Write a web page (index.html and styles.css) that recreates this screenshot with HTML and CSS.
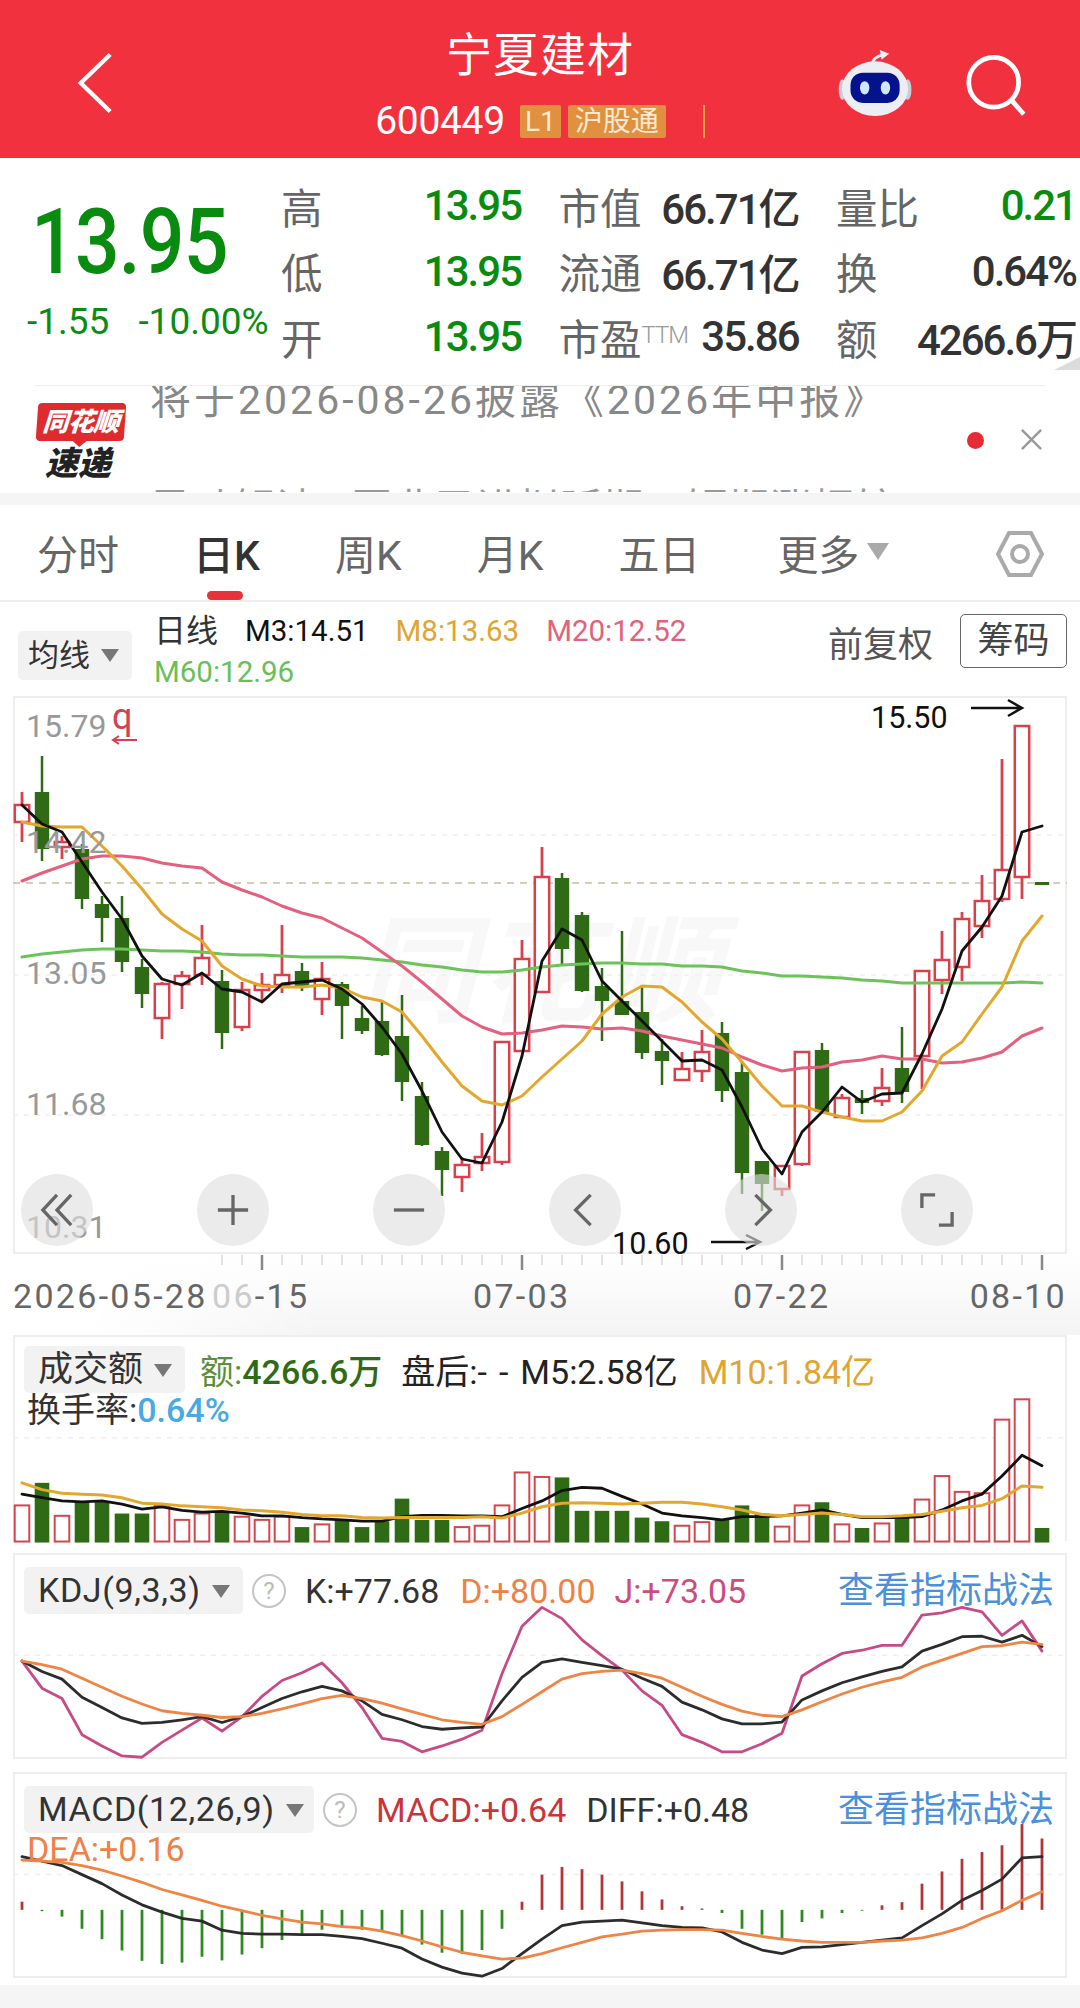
FILE: index.html
```html
<!DOCTYPE html>
<html lang="zh-CN">
<head>
<meta charset="utf-8">
<title>宁夏建材</title>
<link rel="stylesheet" href="styles.css">
</head>
<body>
<div class="page">
  <header class="topbar">
    <svg class="ic-back" viewBox="0 0 40 66"><path d="M36 3 L5 33 L36 63"/></svg>
    <div class="topbar-center">
      <div class="stock-name">宁夏建材</div>
      <div class="stock-code-row">
        <span class="stock-code">600449</span>
        <span class="tag tag-l1">L1</span>
        <span class="tag tag-hgt">沪股通</span>
        <span class="tag-bar"></span>
      </div>
    </div>
    <svg class="ic-robot" viewBox="0 0 80 72">
      <path class="robot-ant" d="M36 16 C36 9 41 7 48 5"/>
      <path class="robot-tip" d="M44 0 L54 4 L46 10 Z"/>
      <ellipse class="robot-ear" cx="4.500" cy="42" rx="4" ry="11"/>
      <ellipse class="robot-ear" cx="73.500" cy="42" rx="4" ry="11"/>
      <ellipse class="robot-head" cx="39" cy="41" rx="35" ry="29"/>
      <rect class="robot-face" x="13" y="24" width="52" height="32" rx="13"/>
      <ellipse class="robot-eye" cx="28" cy="40" rx="5" ry="7"/>
      <ellipse class="robot-eye" cx="50" cy="40" rx="5" ry="7"/>
    </svg>
    <svg class="ic-search" viewBox="0 0 64 66"><circle cx="29" cy="29" r="26.500"/><path d="M48 48 L61 63"/></svg>
  </header>

  <section class="quote">
    <div class="price-box">
      <div class="price"><span class="narrow">13.95</span></div>
      <div class="change"><span>-1.55</span><span>-10.00%</span></div>
    </div>
    <div class="q-grid">
      <div class="q-pair"><span class="q-label">高</span><span class="q-val up">13.95</span></div>
      <div class="q-pair"><span class="q-label">市值</span><span class="q-val">66.71亿</span></div>
      <div class="q-pair"><span class="q-label">量比</span><span class="q-val up">0.21</span></div>
      <div class="q-pair"><span class="q-label">低</span><span class="q-val up">13.95</span></div>
      <div class="q-pair"><span class="q-label">流通</span><span class="q-val">66.71亿</span></div>
      <div class="q-pair"><span class="q-label">换</span><span class="q-val">0.64%</span></div>
      <div class="q-pair"><span class="q-label">开</span><span class="q-val up">13.95</span></div>
      <div class="q-pair"><span class="q-label">市盈<sup class="ttm">TTM</sup></span><span class="q-val">35.86</span></div>
      <div class="q-pair"><span class="q-label">额</span><span class="q-val">4266.6万</span></div>
    </div>
    <span class="corner"></span>
  </section>

  <section class="news">
    <div class="logo">
      <div class="logo-top"><span>同花顺</span></div>
      <div class="logo-bot">速递</div>
    </div>
    <div class="news-text">
      <p class="news-l1">将于2026-08-26披露《2026年中报》</p>
      <p class="news-l2">异动解读 · 同业已进拟延期，短期涨幅较</p>
    </div>
    <span class="news-dot"></span>
    <svg class="news-x" viewBox="0 0 24 24"><path d="M2 2 L22 22 M22 2 L2 22"/></svg>
  </section>

  <div class="gap"></div>

  <nav class="tabs">
    <span class="tab">分时</span>
    <span class="tab tab-on">日K</span>
    <span class="tab">周K</span>
    <span class="tab">月K</span>
    <span class="tab">五日</span>
    <span class="tab tab-more">更多<i class="tri tri-tab"></i></span>
    <svg class="ic-hex" viewBox="0 0 50 48"><path d="M14 3 H36 L47 24 L36 45 H14 L3 24 Z"/><circle cx="25" cy="24" r="8"/></svg>
  </nav>

  <div class="toolbar">
    <span class="pick pick-ma">均线<i class="tri"></i></span>
    <div class="ma-list">
      <span class="ma-day">日线</span>
      <span class="c-black">M3:14.51</span>
      <span class="c-gold">M8:13.63</span>
      <span class="c-pink">M20:12.52</span>
      <span class="c-green ma-60">M60:12.96</span>
    </div>
    <span class="fq">前复权</span>
    <span class="chip-btn">筹码</span>
  </div>

  <div class="charts">
    <div class="k-panel">
      <span class="wm">同花顺</span>
      <svg class="chart" id="kchart" viewBox="13 697 1054 558"></svg>
      <span class="axis-l l1">15.79</span>
      <span class="axis-l l2">14.42</span>
      <span class="axis-l l3">13.05</span>
      <span class="axis-l l4">11.68</span>
      <span class="axis-l l5">10.31</span>
      <span class="nine">q</span>
      <svg class="nine-arrow" viewBox="0 0 26 10"><path d="M26 5 H2 M8 1 L2 5 L8 9"/></svg>
      <span class="hi-lab">15.50</span>
      <svg class="hi-arrow" viewBox="0 0 54 20"><path d="M0 10 H51 M37 2 L51 10 L37 18"/></svg>
      <span class="lo-lab">10.60</span>
      <svg class="lo-arrow" viewBox="0 0 52 20"><path d="M0 10 H49 M35 3 L49 10 L35 17"/></svg>
      <div class="rounds">
        <span class="round"><svg viewBox="0 0 36 36"><path d="M18 2 L3 18 L18 34 M33 2 L18 18 L33 34"/></svg></span>
        <span class="round"><svg viewBox="0 0 36 36"><path d="M18 2 V34 M2 18 H34"/></svg></span>
        <span class="round"><svg viewBox="0 0 36 36"><path d="M2 18 H34"/></svg></span>
        <span class="round"><svg viewBox="0 0 36 36"><path d="M24 2 L8 18 L24 34"/></svg></span>
        <span class="round"><svg viewBox="0 0 36 36"><path d="M12 2 L28 18 L12 34"/></svg></span>
        <span class="round"><svg viewBox="0 0 36 36"><path d="M2 16 V2 H16 M34 20 V34 H20"/></svg></span>
      </div>
    </div>

    <div class="axis">
      <svg class="ticks" id="ticks" viewBox="13 1255 1054 18"></svg>
      <div class="dates">
        <span class="d1">2026-05-28</span>
        <span class="d2"><em>06</em>-15</span>
        <span class="d3">07-03</span>
        <span class="d4">07-22</span>
        <span class="d5">08-10</span>
      </div>
    </div>

    <div class="panel panel-vol">
      <svg class="chart" id="vol" viewBox="13 1336 1054 206"></svg>
      <div class="p-head">
        <span class="pick pick-vol">成交额<i class="tri"></i></span>
        <span class="c-dgreen v-amt"><b>额:</b>4266.6万</span>
        <span class="v-pan">盘后:<span class="dashes">--</span>M5:2.58亿</span>
        <span class="c-gold v-m10">M10:1.84亿</span>
      </div>
      <div class="p-sub v-turn">换手率:<span class="c-blue">0.64%</span></div>
    </div>

    <div class="panel panel-kdj">
      <svg class="chart" id="kdj" viewBox="13 1554 1054 206"></svg>
      <div class="p-head">
        <span class="pick pick-kdj">KDJ(9,3,3)<i class="tri"></i></span>
        <span class="help">?</span>
        <span class="k-k">K:+77.68</span>
        <span class="c-orange k-d">D:+80.00</span>
        <span class="c-mag k-j">J:+73.05</span>
        <span class="link">查看指标战法</span>
      </div>
    </div>

    <div class="panel panel-macd">
      <svg class="chart" id="macd" viewBox="13 1773 1054 206"></svg>
      <div class="p-head">
        <span class="pick pick-macd">MACD(12,26,9)<i class="tri"></i></span>
        <span class="help">?</span>
        <span class="c-red m-m">MACD:+0.64</span>
        <span class="m-diff">DIFF:+0.48</span>
        <span class="link">查看指标战法</span>
      </div>
      <div class="p-sub c-orange m-dea">DEA:+0.16</div>
    </div>
  </div>
  <div class="foot"></div>
</div>
<script src="chart.js"></script>
</body>
</html>
```

FILE: styles.css
```css
* { box-sizing: border-box; }
html, body { margin: 0; padding: 0; background: #fff; }
body { font-family: Roboto, "Noto Sans CJK SC", sans-serif; color: #333; }
.page { width: 1080px; height: 2008px; overflow: hidden; display: flex; flex-direction: column; position: relative; }
p { margin: 0; }
i, em { font-style: normal; }

/* top bar */
.topbar { height: 158px; flex: none; background: #f1323e; color: #fff; position: relative; display: flex; justify-content: center; }
.topbar-center { display: flex; flex-direction: column; align-items: center; padding-top: 28px; }
.stock-name { font-size: 46px; line-height: 54px; letter-spacing: 1px; }
.stock-code-row { display: flex; align-items: center; gap: 7px; height: 34px; margin-top: 22px; }
.stock-code { font-size: 39px; letter-spacing: -.3px; margin-right: 8px; }
.tag { height: 33px; line-height: 33px; background: #e0903f; font-size: 28px; border-radius: 2px; text-align: center; color: #ffe9d0; }
.tag-l1 { width: 41px; }
.tag-hgt { width: 98px; }
.tag-bar { width: 2px; height: 33px; background: #eda046; margin-left: 30px; }
.ic-back { position: absolute; left: 76px; top: 51px; width: 38px; height: 64px; fill: none; stroke: #fff; stroke-width: 4.500; }
.ic-search { position: absolute; left: 966px; top: 55px; width: 61px; height: 62px; fill: none; stroke: #fff; stroke-width: 5; }
.ic-robot { position: absolute; left: 838px; top: 50px; width: 76px; height: 68px; }
.robot-ant { fill: none; stroke: #eef0f6; stroke-width: 3; }
.robot-tip { fill: #eef0f6; }
.robot-ear { fill: #c9cdd8; }
.robot-head { fill: #eceef4; }
.robot-face { fill: #04138c; }
.robot-eye { fill: #cfe6fb; }

/* quote */
.quote { height: 227px; flex: none; position: relative; display: flex; }
.price-box { width: 281px; flex: none; padding: 41px 0 0 31px; }
.price { font-size: 90px; line-height: 88px; font-weight: 500; color: #098b10; height: 88px; }
.narrow { display: inline-block; transform: scaleX(.875); transform-origin: left; letter-spacing: -1px; }
.change { display: flex; gap: 29px; margin: 13px 0 0 -4px; font-size: 37px; line-height: 44px; color: #0a8c12; white-space: nowrap; }
.q-grid { display: grid; grid-template-columns: 240px 240px 240px; column-gap: 37.500px; grid-auto-rows: 65.500px; padding-top: 15px; }
.q-pair { display: flex; justify-content: space-between; align-items: center; white-space: nowrap; }
.q-label { font-size: 41.500px; color: #666; }
.q-val { font-size: 42px; color: #333; font-weight: 500; letter-spacing: -2px; }
.q-val.up { color: #098b10; }
.ttm { font-size: 24px; color: #999; font-weight: 300; vertical-align: 12px; line-height: 0; letter-spacing: -1px; }
.corner { position: absolute; right: 0; bottom: 15px; width: 0; height: 0; border-style: solid; border-width: 0 0 13px 26px; border-color: transparent transparent #dcdcdc transparent; }

/* news */
.news { height: 108px; flex: none; margin: 0 35px; border-top: 1.500px solid #eee; position: relative; display: flex; }
.logo { width: 115px; flex: none; padding: 17px 0 0 2px; }
.logo-top { width: 88px; height: 38px; background: #de2c2e; border-radius: 4px; transform: skewX(-4deg); text-align: center; color: #fff; position: relative; }
.logo-top::after { content: ""; position: absolute; left: 37px; bottom: -6px; border-style: solid; border-width: 6px 7px 0 7px; border-color: #de2c2e transparent transparent transparent; }
.logo-top span { display: inline-block; font-size: 26px; line-height: 38px; font-weight: 900; font-style: italic; letter-spacing: -.5px; }
.logo-bot { margin: 5px 0 0 8px; font-size: 33px; line-height: 36px; font-weight: 900; font-style: italic; color: #222; }
.news-text { position: relative; flex: 1; height: 106px; overflow: hidden; color: #888; }
.news-l1 { font-size: 41px; line-height: 46px; margin-top: -9px; white-space: nowrap; letter-spacing: 3px; }
.news-l2 { font-size: 41px; line-height: 46px; margin-top: 63px; white-space: nowrap; color: #999; width: 760px; overflow: hidden; letter-spacing: .9px; }
.news-dot { position: absolute; left: 932px; top: 46px; width: 17px; height: 17px; border-radius: 50%; background: #e52b33; }
.news-x { position: absolute; left: 984px; top: 42px; width: 25px; height: 23px; fill: none; stroke: #999; stroke-width: 2.500; }

.gap { height: 12px; flex: none; background: #f5f5f5; }

/* tabs */
.tabs { height: 97px; flex: none; border-bottom: 2px solid #eee; display: flex; position: relative; padding-left: 37px; color: #666; }
.tab { font-size: 41px; line-height: 102px; white-space: nowrap; margin-right: 75px; position: relative; height: 95px; }
.tab:nth-child(1) { margin-right: 74px; }
.tab:nth-child(2) { margin-right: 75px; }
.tab:nth-child(5) { margin-right: 77px; }
.tab-on { color: #333; font-weight: 500; }
.tab-on::after { content: ""; position: absolute; left: 14px; bottom: 0; width: 36px; height: 9px; background: #e8323a; border-radius: 5px; }
.tri { display: inline-block; width: 0; height: 0; border-style: solid; border-width: 13px 9px 0 9px; border-color: #777 transparent transparent transparent; margin-left: 11px; vertical-align: 4px; }
.tri-tab { border-width: 17px 11px 0 11px; border-top-color: #aaa; vertical-align: 10px; margin-left: 8px; }
.ic-hex { position: absolute; left: 995px; top: 25px; width: 50px; height: 48px; fill: none; stroke: #aaa; stroke-width: 4; }

/* toolbar */
.toolbar { height: 94px; flex: none; position: relative; }
.pick { background: #f2f2f2; border-radius: 5px; display: inline-block; white-space: nowrap; color: #333; height: 47px; line-height: 47px; }
.pick-ma { position: absolute; left: 18px; top: 29px; width: 114px; height: 49px; font-size: 31px; line-height: 49px; padding-left: 10px; }
.ma-list { position: absolute; left: 154px; top: 9px; width: 600px; display: flex; flex-wrap: wrap; font-size: 29.500px; line-height: 41px; column-gap: 27px; }
.ma-day { font-size: 32px; color: #333; }
.ma-60 { flex-basis: 100%; }
.fq { position: absolute; left: 828px; top: 19px; font-size: 35px; line-height: 50px; color: #555; }
.chip-btn { position: absolute; left: 960px; top: 12px; width: 107px; height: 54px; border: 1.500px solid #666; border-radius: 5px; font-size: 36px; line-height: 53px; text-align: center; color: #444; }
.c-black { color: #111; }
.c-gold { color: #e0a52f; }
.c-pink { color: #e2627a; }
.c-green { color: #69bf58; }
.c-dgreen { color: #2f6b15; font-weight: 500; }
.c-dgreen b { font-weight: 400; color: #5c8f3a; }
.c-blue { color: #4aa8e2; font-weight: 500; }
.c-orange { color: #ee8146; }
.c-mag { color: #c94e7e; }
.c-red { color: #c9343a; }

/* charts */
.charts { flex: none; padding: 0 13px; display: flex; flex-direction: column; }
.k-panel { height: 558px; position: relative; border: 2px solid #eee; }
.chart { position: absolute; left: -2px; top: -2px; width: 1054px; height: calc(100% + 4px); display: block; }
.wm { position: absolute; left: 343px; top: 210px; font-size: 118px; line-height: 130px; color: #f8f8f8; font-style: italic; font-weight: 700; letter-spacing: 4px; white-space: nowrap; }
.axis-l { position: absolute; left: 11px; font-size: 32px; line-height: 34px; color: #999; }
.l1 { top: 11px; }
.l2 { top: 127px; }
.l3 { top: 258px; }
.l4 { top: 389px; }
.l5 { top: 512px; }
.nine { position: absolute; left: 97px; top: 0; font-size: 36px; line-height: 38px; color: #d2414f; }
.nine-arrow { position: absolute; left: 96px; top: 37px; width: 26px; height: 10px; fill: none; stroke: #d2414f; stroke-width: 2; }
.hi-lab, .lo-lab { position: absolute; font-size: 30.500px; line-height: 34px; color: #111; }
.hi-lab { left: 856px; top: 3px; }
.lo-lab { left: 597px; top: 529px; }
.hi-arrow { position: absolute; left: 956px; top: 0; width: 54px; height: 20px; fill: none; stroke: #111; stroke-width: 2.500; }
.lo-arrow { position: absolute; left: 696px; top: 534px; width: 52px; height: 20px; fill: none; stroke: #111; stroke-width: 2.500; }
.rounds { position: absolute; left: 6px; top: 476px; display: flex; gap: 104px; }
.round { width: 72px; height: 72px; border-radius: 50%; background: rgba(222,222,222,.62); display: flex; align-items: center; justify-content: center; }
.round svg { width: 34px; height: 34px; fill: none; stroke: #666; stroke-width: 3.500; }

.axis { height: 81px; flex: none; margin: 0 -13px; padding: 0 13px; background: linear-gradient(90deg, #fff 8%, rgba(255,255,255,0) 30%), linear-gradient(#fff, #f4f4f4); position: relative; }
.ticks { position: absolute; left: 13px; top: 0; width: 1054px; height: 18px; }
.dates { position: absolute; left: 13px; top: 24px; width: 1054px; height: 36px; font-size: 34px; line-height: 36px; color: #666; letter-spacing: 2.300px; }
.dates span { position: absolute; top: 0; white-space: nowrap; }
.d1 { left: 0; }
.d2 { left: 199px; }
.d2 em { color: #ccc; }
.d3 { left: 460px; }
.d4 { left: 720px; }
.d5 { right: 0; }

.panel { height: 206px; position: relative; border: 2px solid #eee; }
.panel-vol { border-bottom: 0; }
.panel-kdj { margin-top: 12px; }
.panel-macd { margin-top: 13px; }
.p-head { position: relative; padding: 9px 0 0 9px; height: 56px; display: flex; align-items: center; font-size: 34px; white-space: nowrap; }
.panel-kdj .p-head, .panel-macd .p-head { padding-top: 12px; height: 59px; }
.pick-vol { width: 161px; padding-left: 14px; font-size: 35px; }
.pick-kdj { width: 219px; padding-left: 14px; font-size: 34px; letter-spacing: .6px; }
.pick-macd { width: 290px; padding-left: 14px; font-size: 34px; letter-spacing: .6px; }
.p-sub { position: absolute; left: 12px; font-size: 34px; line-height: 40px; white-space: nowrap; }
.v-amt { margin-left: 15px; }
.v-pan { margin-left: 19px; color: #222; }
.dashes { letter-spacing: 12px; }
.v-m10 { margin-left: 21px; }
.v-turn { top: 53px; color: #333; }
.help { width: 34px; height: 34px; border-radius: 50%; border: 2px solid #c4c4c4; color: #bbb; font-size: 24px; line-height: 30px; text-align: center; margin-left: 9px; }
.k-k { margin-left: 19px; }
.k-d { margin-left: 21px; }
.k-j { margin-left: 19px; }
.link { position: absolute; right: 11px; top: 12px; font-size: 36px; line-height: 48px; color: #4b90da; }
.m-m { margin-left: 19px; }
.m-diff { margin-left: 20px; }
.m-dea { top: 55px; }
.foot { height: 30px; flex: none; background: linear-gradient(#fff 7px, #f5f5f5 7px); }

/* svg marks */
.up-body { fill: #fff; stroke: #d8404c; stroke-width: 2.500; }
.up-wick { stroke: #d8404c; stroke-width: 2.800; }
.dn-body { fill: #2f6b14; }
.dn-wick { stroke: #2f6b14; stroke-width: 2.500; }
.dash { stroke: #efefef; stroke-width: 1.500; stroke-dasharray: 5 6; }
.dash-prev { stroke: #c8bea0; stroke-width: 1.500; stroke-dasharray: 7 6; }
.vol-up { fill: #fff; stroke: #d4464f; stroke-width: 2; }
.line { fill: none; stroke-linejoin: round; stroke-linecap: round; }
.l-black { stroke: #111; stroke-width: 2.800; }
.l-gold { stroke: #e3a72e; stroke-width: 3; }
.l-pink { stroke: #e4607e; stroke-width: 3; }
.l-green { stroke: #6cc35a; stroke-width: 3; }
.l-orange { stroke: #ef8444; stroke-width: 2.800; }
.l-mag { stroke: #c84a85; stroke-width: 2.800; }
.l-dark { stroke: #2c2c2c; stroke-width: 2.800; }
.m-up { stroke: #b53436; stroke-width: 2.800; }
.m-dn { stroke: #2f8a22; stroke-width: 2.800; }
.tick { stroke: #cfcfcf; stroke-width: 1.200; }
.tick-major { stroke: #888; stroke-width: 2.500; }
```

FILE: chart.js
```js
(function () {
  var NS = 'http://www.w3.org/2000/svg';
  function X(i) { return 22 + 20 * i; }
  function el(svg, name, cls, attrs) {
    var e = document.createElementNS(NS, name);
    e.setAttribute('class', cls);
    for (var k in attrs) e.setAttribute(k, attrs[k]);
    svg.appendChild(e);
    return e;
  }
  function vline(svg, cls, x, a, b) { if (b > a) el(svg, 'line', cls, { x1: x, x2: x, y1: a, y2: b }); }
  function hline(svg, cls, y) { el(svg, 'line', cls, { x1: 13, x2: 1067, y1: y, y2: y }); }
  function poly(svg, cls, ys, f) {
    var pts = ys.map(function (v, i) { return X(i) + ',' + (f ? f(v) : v); }).join(' ');
    el(svg, 'polyline', 'line ' + cls, { points: pts });
  }

  // [kind, wickTop, bodyTop, bodyBottom, wickBottom]
  var C = [
    ['u',793,806,823,843],['d',757,793,850,862],['u',837,843,848,860],['d',845,850,900,910],
    ['d',897,905,919,943],['d',897,919,963,973],['d',960,968,995,1009],['u',983,985,1019,1040],
    ['u',972,977,985,1010],['u',926,959,976,986],['d',971,982,1034,1050],['u',983,991,1028,1032],
    ['u',974,986,991,1003],['u',926,976,986,994],['d',964,972,987,992],['u',963,980,1000,1016],
    ['d',983,985,1007,1040],['d',1007,1019,1032,1035],['d',1002,1022,1056,1057],['d',996,1037,1083,1102],
    ['d',1083,1097,1146,1147],['d',1148,1152,1171,1197],['u',1158,1166,1178,1193],['u',1134,1158,1164,1172],
    ['u',1043,1043,1163,1166],['u',941,960,1052,1052],['u',848,878,993,993],['d',874,879,950,965],
    ['d',913,916,992,993],['d',969,987,1002,1042],['d',932,1002,1016,1016],['d',986,1013,1054,1060],
    ['d',1040,1052,1062,1086],['u',1053,1070,1081,1081],['u',1031,1053,1072,1083],['d',1023,1034,1092,1103],
    ['d',1063,1073,1174,1195],['d',1162,1162,1185,1212],['u',1166,1167,1190,1197],['u',1053,1053,1165,1167],
    ['d',1044,1051,1113,1113],['u',1095,1099,1118,1118],['d',1091,1099,1104,1115],['u',1069,1089,1102,1107],
    ['d',1028,1069,1093,1104],['u',972,972,1057,1090],['u',932,961,981,995],['u',913,920,968,982],
    ['u',876,902,927,939],['u',760,871,900,903],['u',727,727,878,900],['d',884,883,886,885]
  ];
  var M3 = [806,825,833,863,893,920,957,980,986,974,990,993,1003,985,983,981,990,1005,1028,1055,1092,1133,1160,1164,1123,1057,962,930,941,982,1002,1022,1042,1062,1061,1071,1108,1150,1175,1133,1113,1088,1103,1095,1094,1055,1010,952,928,897,833,827];
  var M8 = [823,827,828,828,847,867,890,915,930,942,967,980,987,988,988,986,989,998,1002,1013,1037,1063,1087,1102,1106,1097,1078,1060,1042,1015,998,987,988,1003,1023,1040,1063,1087,1107,1107,1113,1118,1122,1122,1113,1092,1057,1043,1015,988,942,917];
  var M20 = [882,874,867,860,857,857,859,864,867,869,883,891,898,907,914,919,929,939,953,967,983,1000,1017,1028,1035,1034,1031,1027,1028,1030,1029,1032,1037,1041,1045,1049,1058,1066,1072,1069,1068,1063,1061,1057,1060,1060,1064,1063,1059,1053,1037,1029];
  var M60 = [958,955,953,951,950,950,951,952,952,953,955,956,956,957,958,958,958,959,961,963,966,968,971,973,973,971,968,966,965,964,964,965,965,967,967,968,972,974,977,977,978,979,981,982,984,984,984,984,984,984,983,984];

  var k = document.getElementById('kchart');
  hline(k, 'dash', 836); hline(k, 'dash', 976); hline(k, 'dash', 1116);
  hline(k, 'dash-prev', 884);
  C.forEach(function (c, i) {
    var x = X(i), up = c[0] === 'u';
    vline(k, up ? 'up-wick' : 'dn-wick', x, c[1], c[2]);
    vline(k, up ? 'up-wick' : 'dn-wick', x, c[3], c[4]);
    el(k, 'rect', up ? 'up-body' : 'dn-body', { x: x - 7.2, y: c[2], width: 14.4, height: c[3] - c[2] });
  });
  poly(k, 'l-green', M60);
  poly(k, 'l-pink', M20);
  poly(k, 'l-gold', M8);
  poly(k, 'l-black', M3);

  var t = document.getElementById('ticks');
  for (var i = 10; i < 52; i++) {
    var major = i === 12 || i === 25 || i === 38 || i === 51;
    el(t, 'line', major ? 'tick-major' : 'tick', { x1: X(i), x2: X(i), y1: 1256, y2: major ? 1271 : 1266 });
  }

  // lower panels are read off on a 2.215 scale from y = 1300
  function P(p) { return 1300 + p / 2.215; }

  var VB = 'u455 d405 u478 d447 d447 d473 d473 u455 u487 u473 d470 u480 u487 u480 d503 u497 d485 d503 d490 d440 d487 d487 u503 u500 u455 u382 u392 d393 d467 d467 d467 d482 d490 u500 u492 d487 d455 d473 u502 u455 d448 u497 d505 u495 d480 u442 u390 u425 u428 u265 u220 d505'.split(' ');
  var VK = [430,438,445,447,445,452,463,458,466,470,468,472,478,478,482,485,487,490,490,480,477,477,478,478,480,462,445,422,415,417,435,452,472,478,482,487,480,480,478,472,465,475,482,482,482,480,465,445,430,390,344,367];
  var VO = [405,420,428,430,432,438,450,452,456,458,460,465,467,470,475,478,478,482,483,482,482,482,482,480,483,472,458,450,449,450,452,450,448,448,452,458,465,475,478,475,472,475,480,480,478,475,468,460,455,440,412,415];
  var v = document.getElementById('vol');
  hline(v, 'dash', P(305));
  var base = P(535);
  VB.forEach(function (b, i) {
    var top = P(+b.slice(1)), x = X(i);
    if (b[0] === 'u') el(v, 'rect', 'vol-up', { x: x - 7.300, y: top, width: 14.600, height: base - top });
    else el(v, 'rect', 'dn-body', { x: x - 7.300, y: top, width: 14.600, height: base - top + 1 });
  });
  poly(v, 'l-black', VK, P);
  poly(v, 'l-gold', VO, P);

  var KK = [802,825,842,882,905,928,940,938,932,925,938,925,905,885,870,858,868,890,920,932,947,953,950,948,890,838,805,797,805,812,820,840,858,893,910,930,941,941,937,888,868,850,837,825,815,780,765,748,747,760,745,770];
  var KD = [802,810,820,840,860,880,897,912,918,922,927,925,918,908,897,885,878,885,895,908,920,932,938,942,925,898,870,842,830,825,822,830,840,860,880,898,913,922,925,910,892,875,860,848,838,815,800,785,770,768,760,765];
  var KJ = [802,862,885,965,990,1012,1015,982,955,928,957,925,880,845,828,806,850,905,973,980,1003,990,975,955,830,725,683,708,755,790,822,868,900,965,982,1003,1003,985,962,835,808,785,778,767,767,700,695,683,693,745,713,780];
  var d = document.getElementById('kdj');
  hline(d, 'dash', P(789));
  poly(d, 'l-mag', KJ, P);
  poly(d, 'l-dark', KK, P);
  poly(d, 'l-orange', KD, P);

  var MB = [1335,1356,1368,1395,1418,1443,1466,1473,1470,1457,1465,1452,1438,1420,1408,1397,1392,1397,1400,1410,1430,1448,1450,1442,1395,1335,1275,1258,1263,1275,1290,1312,1330,1345,1350,1360,1395,1408,1418,1380,1372,1360,1355,1343,1336,1295,1268,1240,1225,1210,1163,1195];
  var MK = [1235,1245,1255,1275,1295,1320,1342,1358,1372,1378,1398,1405,1407,1407,1408,1408,1412,1417,1427,1438,1462,1480,1493,1500,1483,1450,1418,1388,1380,1378,1376,1382,1388,1392,1393,1402,1425,1442,1450,1436,1435,1430,1425,1420,1415,1388,1362,1332,1310,1285,1238,1235];
  var MO = [1243,1245,1248,1255,1265,1278,1292,1308,1320,1332,1345,1355,1365,1373,1380,1384,1390,1393,1400,1410,1422,1435,1447,1455,1462,1460,1450,1437,1425,1413,1407,1400,1398,1397,1397,1398,1405,1412,1418,1422,1425,1425,1425,1422,1420,1415,1405,1392,1372,1355,1332,1313];
  var m = document.getElementById('macd');
  hline(m, 'dash', P(1275));
  var zero = 1353;
  MB.forEach(function (p, i) {
    var x = X(i);
    if (p < zero) el(m, 'line', 'm-up', { x1: x, x2: x, y1: P(p), y2: P(zero) });
    else el(m, 'line', 'm-dn', { x1: x, x2: x, y1: P(zero), y2: P(p) });
  });
  poly(m, 'l-dark', MK, P);
  poly(m, 'l-orange', MO, P);
})();
```
